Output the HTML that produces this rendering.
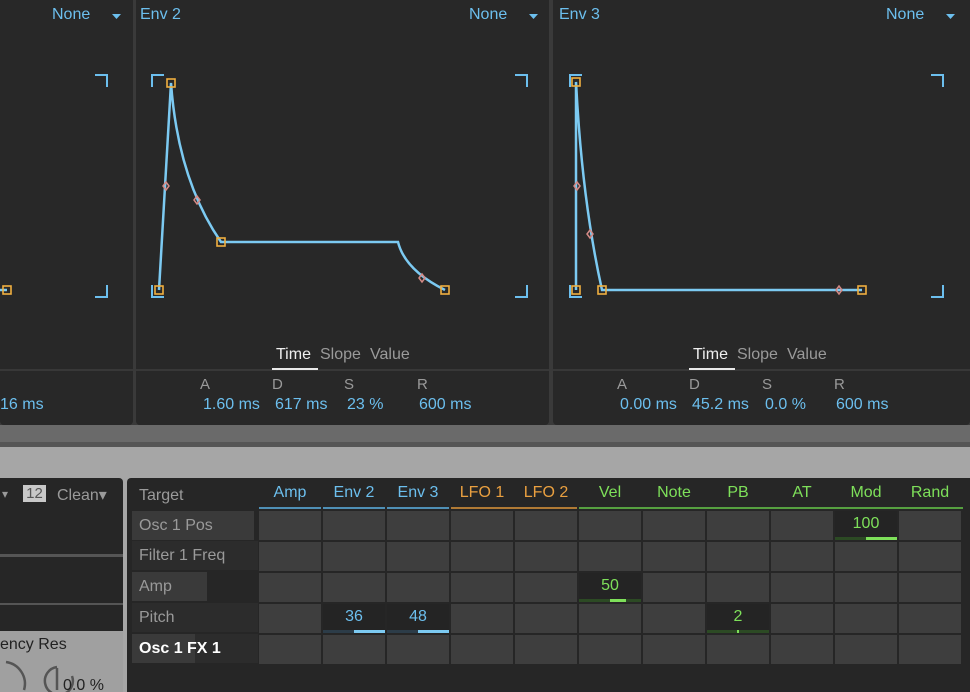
<!DOCTYPE html>
<html><head><meta charset="utf-8"><style>
*{margin:0;padding:0;box-sizing:border-box}
body{width:970px;height:692px;overflow:hidden;background:#3a3a3a;font-family:"Liberation Sans",sans-serif;position:relative}
.a{position:absolute}
.pan{position:absolute;background:#282828;border-radius:0 0 4px 4px}
.b{color:#6cbfee;font-size:16px}
.g{color:#9a9a9a;font-size:15px}
.grid{position:absolute;left:259px;top:511px;display:grid;grid-template-columns:repeat(11,62px);grid-auto-rows:29px;gap:2px}
.grid div{background:#3e3e3e;position:relative;text-align:center;font-size:16px;line-height:26px}
.grid div.v{background:#242424}
.bar{position:absolute;left:0;right:0;bottom:0;height:3px}
.hd{position:absolute;top:484px;width:62px;text-align:center;font-size:16px}
.ul{position:absolute;top:507px;height:2px}
.lab{position:absolute;left:132px;height:29px;line-height:29px;padding-left:7px;font-size:16px;color:#9a9a9a}
</style></head><body>
<div class="pan" style="left:0;top:0;width:133px;height:425px"></div>
<div class="pan" style="left:136px;top:0;width:413px;height:425px"></div>
<div class="pan" style="left:553px;top:0;width:417px;height:425px"></div>
<div class="a" style="left:0;top:425px;width:970px;height:17px;background:#6a6a6a"></div>
<div class="a" style="left:0;top:442px;width:970px;height:5px;background:#555"></div>
<div class="a" style="left:0;top:447px;width:970px;height:245px;background:#a6a6a6"></div>

<div class="a b" style="left:52px;top:6px">None</div>
<div class="a b" style="left:140px;top:6px">Env 2</div>
<div class="a b" style="left:469px;top:6px">None</div>
<div class="a b" style="left:559px;top:6px">Env 3</div>
<div class="a b" style="left:886px;top:6px">None</div>

<svg class="a" style="left:0;top:0" width="970" height="425">
<g fill="#6cbfee"><path d="M112 14h9l-4.5 5z"/><path d="M529 14h9l-4.5 5z"/><path d="M946 14h9l-4.5 5z"/></g>
<g stroke="#6cbfee" stroke-width="2" fill="none">
<path d="M95 75h12v12M95 297h12v-12"/>
<path d="M152 87v-12h12M152 285v12h12M515 75h12v12M515 297h12v-12"/>
<path d="M570 87v-12h12M570 285v12h12M931 75h12v12M931 297h12v-12"/>
</g>
<g stroke="#7ccaf2" stroke-width="2.5" fill="none">
<path d="M159 290L171 83Q178 180 221 242L398 242Q405 270 445 290"/>
<path d="M576 290L576 82Q582 200 602 290L862 290"/>
<path d="M0 290H7"/>
</g>
<g fill="none" stroke="#f0b040" stroke-width="1.6">
<rect x="3" y="286" width="8" height="8"/>
<rect x="155" y="286" width="8" height="8"/><rect x="167" y="79" width="8" height="8"/><rect x="217" y="238" width="8" height="8"/><rect x="441" y="286" width="8" height="8"/>
<rect x="572" y="286" width="8" height="8"/><rect x="572" y="78" width="8" height="8"/><rect x="598" y="286" width="8" height="8"/><rect x="858" y="286" width="8" height="8"/>
</g>
<g fill="none" stroke="#d58a86" stroke-width="1.5">
<path d="M166 182l3 4-3 4-3-4z"/><path d="M197 196l3 4-3 4-3-4z"/><path d="M422 274l3 4-3 4-3-4z"/>
<path d="M577 182l3 4-3 4-3-4z"/><path d="M590 230l3 4-3 4-3-4z"/><path d="M839 286l3 4-3 4-3-4z"/>
</g>
<g stroke="#3e3e3e" stroke-width="1.5"><path d="M0 370H133M136 370H549M553 370H970"/></g>
<g stroke="#e8e8e8" stroke-width="2"><path d="M272 369H318M689 369H735"/></g>
</svg>

<div class="a" style="left:276px;top:346px;font-size:16px;color:#eee">Time</div>
<div class="a g" style="left:320px;top:346px;font-size:16px">Slope</div>
<div class="a g" style="left:370px;top:346px;font-size:16px">Value</div>
<div class="a" style="left:693px;top:346px;font-size:16px;color:#eee">Time</div>
<div class="a g" style="left:737px;top:346px;font-size:16px">Slope</div>
<div class="a g" style="left:787px;top:346px;font-size:16px">Value</div>

<div class="a g" style="left:200px;top:376px">A</div><div class="a g" style="left:272px;top:376px">D</div><div class="a g" style="left:344px;top:376px">S</div><div class="a g" style="left:417px;top:376px">R</div>
<div class="a g" style="left:617px;top:376px">A</div><div class="a g" style="left:689px;top:376px">D</div><div class="a g" style="left:762px;top:376px">S</div><div class="a g" style="left:834px;top:376px">R</div>
<div class="a b" style="left:0;top:396px">16 ms</div>
<div class="a b" style="left:203px;top:396px">1.60 ms</div><div class="a b" style="left:275px;top:396px">617 ms</div><div class="a b" style="left:347px;top:396px">23 %</div><div class="a b" style="left:419px;top:396px">600 ms</div>
<div class="a b" style="left:620px;top:396px">0.00 ms</div><div class="a b" style="left:692px;top:396px">45.2 ms</div><div class="a b" style="left:765px;top:396px">0.0 %</div><div class="a b" style="left:836px;top:396px">600 ms</div>

<!-- bottom left panel -->
<div class="a" style="left:0;top:478px;width:123px;height:214px;background:#a0a0a0;border-radius:0 4px 0 0;overflow:hidden">
<div class="a" style="left:0;top:0;width:123px;height:153px;background:#262626"></div>
<div class="a" style="left:0;top:76px;width:123px;height:3px;background:#555"></div>
<div class="a" style="left:0;top:125px;width:123px;height:2px;background:#555"></div>
<div class="a" style="left:2px;top:9px;color:#999;font-size:12px">▾</div>
<div class="a" style="left:23px;top:7px;width:23px;height:17px;background:#c8c8c8;color:#555;font-size:15px;text-align:center;line-height:17px">12</div>
<div class="a" style="left:57px;top:7px;color:#9a9a9a;font-size:16px">Clean▾</div>
<div class="a" style="left:0;top:158px;color:#222;font-size:16px">ency Res</div>
<svg class="a" style="left:0;top:182px" width="123" height="32"><g fill="none" stroke="#555" stroke-width="2.5"><path d="M6 2A22 22 0 0 1 24 30"/><path d="M72 16A14 14 0 1 1 57 7M57 8V30"/></g></svg>
<div class="a" style="left:63px;top:199px;color:#222;font-size:16px">0.0 %</div>
</div>

<!-- matrix -->
<div class="a" style="left:127px;top:478px;width:843px;height:214px;background:#262626;border-radius:4px 0 0 0"></div>
<div class="a g" style="left:139px;top:487px;font-size:16px">Target</div>
<div class="lab" style="top:511px;width:122px;background:#3a3a3a">Osc 1 Pos</div>
<div class="lab" style="top:541px;width:126px;background:#2c2c2c">Filter 1 Freq</div>
<div class="lab" style="top:572px;width:75px;background:#3a3a3a">Amp</div>
<div class="lab" style="top:603px;width:126px;background:#2c2c2c">Pitch</div>
<div class="lab" style="top:634px;width:126px;background:#2c2c2c;color:#fff;font-weight:bold"><span class="a" style="left:0;top:0;width:63px;height:29px;background:#3a3a3a"></span><span style="position:relative">Osc 1 FX 1</span></div>

<div class="hd" style="left:259px;color:#6cbfee">Amp</div>
<div class="hd" style="left:323px;color:#6cbfee">Env 2</div>
<div class="hd" style="left:387px;color:#6cbfee">Env 3</div>
<div class="hd" style="left:451px;color:#eaa040">LFO 1</div>
<div class="hd" style="left:515px;color:#eaa040">LFO 2</div>
<div class="hd" style="left:579px;color:#7ee05a">Vel</div>
<div class="hd" style="left:643px;color:#7ee05a">Note</div>
<div class="hd" style="left:707px;color:#7ee05a">PB</div>
<div class="hd" style="left:771px;color:#7ee05a">AT</div>
<div class="hd" style="left:835px;color:#7ee05a">Mod</div>
<div class="hd" style="left:899px;color:#7ee05a">Rand</div>
<div class="ul" style="left:259px;width:62px;background:#4f8fb5"></div>
<div class="ul" style="left:323px;width:62px;background:#4f8fb5"></div>
<div class="ul" style="left:387px;width:62px;background:#4f8fb5"></div>
<div class="ul" style="left:451px;width:126px;background:#b07a35"></div>
<div class="ul" style="left:579px;width:384px;background:#56a040"></div>

<div class="grid">
<div></div><div></div><div></div><div></div><div></div><div></div><div></div><div></div><div></div>
<div class="v" style="color:#7ee05a">100<span class="bar" style="background:#2c4a24"></span><span class="bar" style="left:31px;background:#7ee05a"></span></div><div></div>
<div></div><div></div><div></div><div></div><div></div><div></div><div></div><div></div><div></div><div></div><div></div>
<div></div><div></div><div></div><div></div><div></div>
<div class="v" style="color:#7ee05a">50<span class="bar" style="background:#2c4a24"></span><span class="bar" style="left:31px;right:15px;background:#7ee05a"></span></div>
<div></div><div></div><div></div><div></div><div></div>
<div></div>
<div class="v" style="color:#6cbfee">36<span class="bar" style="background:#2c3c48"></span><span class="bar" style="left:31px;background:#7ccaf2"></span></div>
<div class="v" style="color:#6cbfee">48<span class="bar" style="background:#2c3c48"></span><span class="bar" style="left:31px;background:#7ccaf2"></span></div>
<div></div><div></div><div></div><div></div>
<div class="v" style="color:#7ee05a">2<span class="bar" style="background:#2c4a24"></span><span class="bar" style="left:30px;right:30px;background:#7ee05a"></span></div>
<div></div><div></div><div></div>
<div></div><div></div><div></div><div></div><div></div><div></div><div></div><div></div><div></div><div></div><div></div>
</div>
</body></html>
